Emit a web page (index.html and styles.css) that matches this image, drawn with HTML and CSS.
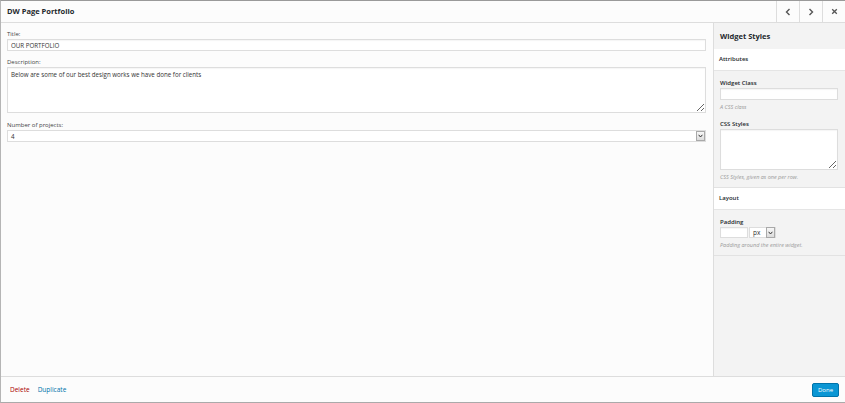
FILE: index.html
```html
<!DOCTYPE html>
<html lang="en">
<head>
  <meta charset="UTF-8">
  <meta name="viewport" content="width=device-width, initial-scale=1.0">
  <title>DW Page Portfolio</title>
  <link rel="stylesheet" href="styles.css">
</head>
<body>

  <div class="modal">
    <div class="modal-header">
      <h1>DW Page Portfolio</h1>
      <div class="nav">
        <button class="nav-btn" title="Previous">
          <svg width="6" height="8" viewBox="0 0 6 8"><path d="M4.5 1 L1.5 4 L4.5 7" fill="none" stroke="#555" stroke-width="1.4"/></svg>
        </button>
        <button class="nav-btn" title="Next">
          <svg width="6" height="8" viewBox="0 0 6 8"><path d="M1.5 1 L4.5 4 L1.5 7" fill="none" stroke="#555" stroke-width="1.4"/></svg>
        </button>
        <button class="nav-btn" title="Close">
          <svg width="7" height="7" viewBox="0 0 7 7"><path d="M1.2 1.2 L5.8 5.8 M5.8 1.2 L1.2 5.8" fill="none" stroke="#555" stroke-width="1.3"/></svg>
        </button>
      </div>
    </div>

    <div class="modal-body">
      <form class="main">
        <div class="field">
          <label for="title">Title:</label>
          <input type="text" id="title" value="OUR PORTFOLIO">
        </div>
        <div class="field field-desc">
          <label for="description">Description:</label>
          <textarea id="description">Below are some of our best design works we have done for clients</textarea>
        </div>
        <div class="field">
          <label>Number of projects:</label>
          <div class="select">
            <span class="value">4</span>
            <span class="arrow">
              <svg width="5" height="4" viewBox="0 0 5 4"><path d="M0.6 0.8 L2.5 3 L4.4 0.8" fill="none" stroke="#333" stroke-width="1"/></svg>
            </span>
          </div>
        </div>
      </form>

      <aside class="sidebar">
        <h2>Widget Styles</h2>

        <div class="section-title">Attributes</div>
        <div class="section">
          <div class="s-field">
            <label>Widget Class</label>
            <input type="text" class="s-input">
            <p class="hint">A CSS class</p>
          </div>
          <div class="s-field">
            <label>CSS Styles</label>
            <textarea class="s-textarea"></textarea>
            <p class="hint">CSS Styles, given as one per row.</p>
          </div>
        </div>

        <div class="section-title">Layout</div>
        <div class="section">
          <div class="s-field">
            <label>Padding</label>
            <div class="padding-row">
              <input type="text" class="s-input small">
              <div class="unit">
                <span class="value">px</span>
                <span class="arrow">
                  <svg width="5" height="4" viewBox="0 0 5 4"><path d="M0.6 0.8 L2.5 3 L4.4 0.8" fill="none" stroke="#333" stroke-width="1"/></svg>
                </span>
              </div>
            </div>
            <p class="hint">Padding around the entire widget.</p>
          </div>
        </div>
      </aside>
    </div>

    <div class="modal-footer">
      <div class="actions">
        <a href="#" class="delete">Delete</a>
        <a href="#" class="duplicate">Duplicate</a>
      </div>
      <button class="done">Done</button>
    </div>
  </div>

</body>
</html>
```

FILE: styles.css
```css
* {
  box-sizing: border-box;
}

body {
  margin: 0;
  padding: 0;
  font-family: "Open Sans", Arial, sans-serif;
  color: #333;
  background-color: #fcfcfc;
}

.modal {
  width: 845px;
  height: 403px;
  display: flex;
  flex-direction: column;
  border-top: 1px solid #9a9a9a;
  border-left: 1px solid #b5b5b5;
  border-bottom: 1px solid #aaa;
  background-color: #fcfcfc;
}

/* header */
.modal-header {
  height: 22px;
  display: flex;
  justify-content: space-between;
  border-bottom: 1px solid #dddddd;
  background-color: #fcfcfc;
}

.modal-header h1 {
  margin: 0;
  padding-left: 6px;
  font-size: 7.5px;
  line-height: 21px;
  font-weight: 700;
  color: #23282d;
}

.nav {
  display: flex;
}

.nav-btn {
  width: 23px;
  height: 21px;
  padding: 0;
  border: none;
  border-left: 1px solid #dddddd;
  background: transparent;
  display: flex;
  align-items: center;
  justify-content: center;
}

/* body */
.modal-body {
  flex: 1;
  display: flex;
}

.main {
  flex: 1;
  padding: 7px 7px 0 6px;
  margin: 0;
}

.field {
  margin-bottom: 7px;
}

.field-desc {
  margin-bottom: 8px;
}

label {
  display: block;
  font-size: 6px;
  line-height: 8px;
  margin-bottom: 1px;
  color: #444;
}

input[type="text"],
textarea {
  display: block;
  width: 100%;
  margin: 0;
  border: 1px solid #dddddd;
  background-color: #fff;
  font-family: "Open Sans", Arial, sans-serif;
  color: #333;
  box-shadow: inset 0 1px 1px rgba(0, 0, 0, 0.04);
}

.main input[type="text"] {
  height: 12px;
  padding: 0 3px;
  font-size: 6.2px;
}

.main textarea {
  height: 46px;
  padding: 2px 3px;
  font-size: 6.2px;
  line-height: 9px;
}

.select {
  height: 12px;
  display: flex;
  justify-content: space-between;
  align-items: center;
  border: 1px solid #dddddd;
  background-color: #fff;
  font-size: 6.2px;
  padding-left: 3px;
}

.value {
  color: #333;
}

.arrow {
  width: 9px;
  height: 10px;
  display: flex;
  align-items: center;
  justify-content: center;
  border: 1px solid #a9a9a9;
  background: linear-gradient(#f7f7f7, #dcdcdc);
}

/* sidebar */
.sidebar {
  width: 132px;
  border-left: 1px solid #dddddd;
  background-color: #f3f3f3;
}

.sidebar h2 {
  margin: 0;
  height: 26px;
  padding-left: 6px;
  font-size: 7.5px;
  line-height: 26px;
  font-weight: 700;
  color: #23282d;
}

.section-title {
  height: 22px;
  padding-left: 5px;
  font-size: 6px;
  line-height: 21px;
  font-weight: 600;
  color: #23282d;
  background-color: #fff;
  border-bottom: 1px solid #e5e5e5;
}

.section {
  padding: 8px 7px 1px 6px;
  border-bottom: 1px solid #e2e2e2;
}

.sidebar label {
  font-size: 6px;
  font-weight: 600;
  color: #23282d;
  margin-bottom: 1px;
}

.s-input {
  height: 12px;
  padding: 0 2px;
  font-size: 6px;
}

.s-textarea {
  height: 41px;
  resize: vertical;
}

.hint {
  margin: 4px 0 9px;
  font-size: 5.5px;
  line-height: 7px;
  font-style: italic;
  color: #999;
}

.s-field:last-child .hint {
  margin-bottom: 5px;
}

.padding-row {
  display: flex;
  gap: 1px;
}

.s-input.small {
  width: 28px;
  height: 11px;
}

.unit {
  width: 27px;
  height: 11px;
  display: flex;
  justify-content: space-between;
  align-items: center;
  border: 1px solid #dddddd;
  background-color: #fff;
  font-size: 6.5px;
  padding-left: 3px;
}

.unit .arrow {
  height: 11px;
}

/* footer */
.modal-footer {
  height: 26px;
  display: flex;
  justify-content: space-between;
  align-items: center;
  padding: 0 6px 0 9px;
  border-top: 1px solid #dddddd;
  background-color: #fcfcfc;
}

.actions {
  display: flex;
  gap: 8px;
  font-size: 6.5px;
  line-height: 9px;
}

.actions a {
  text-decoration: none;
}

.delete {
  color: #a00;
}

.duplicate {
  color: #0073aa;
}

.done {
  height: 14px;
  padding: 0 5px;
  border: 1px solid #0073aa;
  border-radius: 2px;
  background-color: #0a96d4;
  color: #fff;
  font-family: "Open Sans", Arial, sans-serif;
  font-size: 6px;
}
```
